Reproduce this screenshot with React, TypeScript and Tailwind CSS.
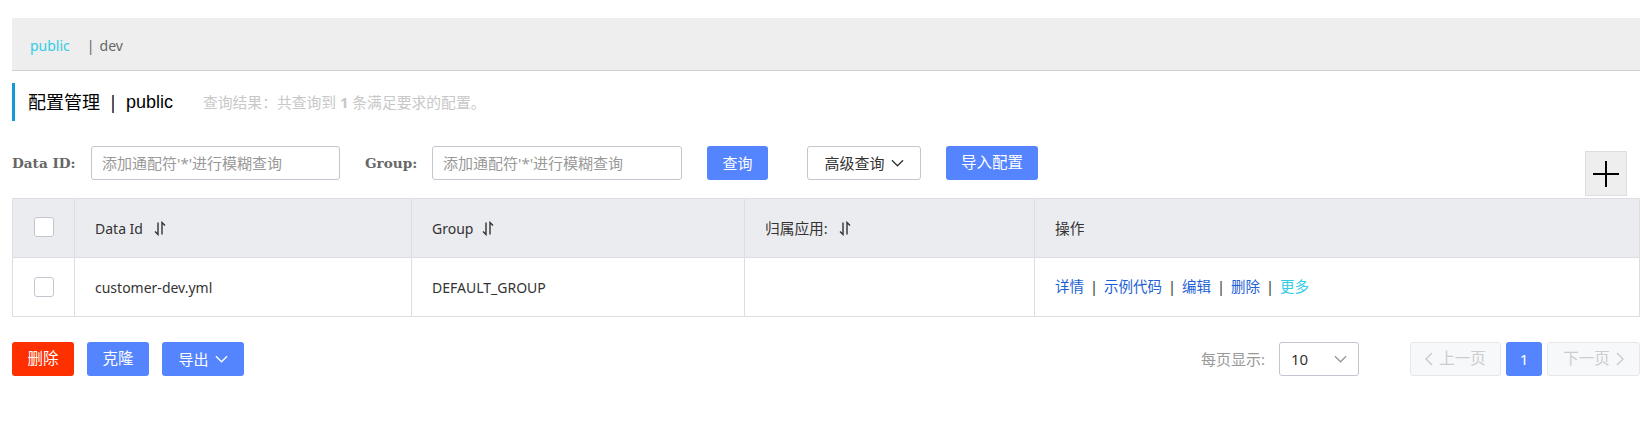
import React from "react";

const Chevron = ({ className }: { className?: string }) => (
  <svg viewBox="0 0 14 8" className={className} fill="none" stroke="currentColor" strokeWidth="1.4">
    <polyline points="1,1 7,7 13,1" />
  </svg>
);

const SortIcon = () => (
  <svg width="12" height="15" viewBox="0 0 12 15" fill="none" stroke="#333" strokeWidth="1.4">
    <path d="M4 1.5 V13.5 L1 10.5" />
    <path d="M8 13.5 V1.5 L11 4.5" />
  </svg>
);

const Checkbox = () => (
  <div className="w-[20px] h-[20px] border border-[#c4c6cf] rounded-[3px] bg-white" />
);

export default function App() {
  return (
    <div className="w-[1652px] h-[435px] bg-white px-[12px] pt-[18px] font-['Noto_Sans','Noto_Sans_CJK_SC',sans-serif] text-[14px] text-[#333]">
      {/* namespace bar */}
      <div className="h-[53px] bg-[#eeeeee] border-b border-[#cfcfcf] flex items-center pl-[18px] pt-[3px]">
        <span className="text-[#33cde5] text-[14px]">public</span>
        <span className="text-[#666] text-[14px] ml-[17px]">|</span>
        <span className="text-[#666] text-[14px] ml-[5px]">dev</span>
      </div>

      {/* title */}
      <div className="mt-[12px] h-[38px] border-l-[3px] border-[#139ad6] flex items-center pl-[13px]">
        <span className="text-[18px] text-black">配置管理</span>
        <span className="text-[18px] text-black mx-[8px]">|</span>
        <span className="text-[18px] text-black font-['Liberation_Sans',sans-serif]">public</span>
        <span className="ml-[30px] text-[14.8px] text-[#c8c8c8]">
          查询结果：共查询到 <strong className="font-bold">1</strong> 条满足要求的配置。
        </span>
      </div>

      {/* filters */}
      <div className="mt-[25px] flex items-start justify-between">
        <div className="flex items-center h-[34px]">
          <label className="w-[63px] font-['DejaVu_Serif',serif] font-bold text-[13.6px] text-[#666] whitespace-nowrap">Data ID:</label>
          <div className="ml-[16px] w-[249px] h-[34px] border border-[#c4c6cf] rounded-[3px] flex items-center pl-[10px] text-[#999] text-[15px] whitespace-nowrap">
            添加通配符'*'进行模糊查询
          </div>
          <label className="ml-[25px] w-[51px] font-['DejaVu_Serif',serif] font-bold text-[13.6px] text-[#666] whitespace-nowrap">Group:</label>
          <div className="ml-[16px] w-[250px] h-[34px] border border-[#c4c6cf] rounded-[3px] flex items-center pl-[10px] text-[#999] text-[15px] whitespace-nowrap">
            添加通配符'*'进行模糊查询
          </div>
          <button className="ml-[25px] w-[61px] h-[34px] rounded-[3px] bg-[#5584ff] text-white text-[15px] flex items-center justify-center">查询</button>
          <button className="ml-[39px] w-[114px] h-[34px] rounded-[3px] bg-white border border-[#c4c6cf] text-[#333] text-[15px] flex items-center justify-center gap-[6px]">
            高级查询
            <Chevron className="w-[13px] h-[8px] text-[#333]" />
          </button>
          <button className="ml-[25px] w-[92px] h-[34px] rounded-[3px] bg-[#5584ff] text-white text-[15.5px] flex items-center justify-center">导入配置</button>
        </div>
        <div className="mt-[5px] mr-[13px] w-[42px] h-[45px] bg-[#eeeeee] border border-[#dddddd] flex items-center justify-center">
          <svg width="26" height="26" viewBox="0 0 26 26" stroke="#000" strokeWidth="2">
            <path d="M13 0 V26 M0 13 H26" />
          </svg>
        </div>
      </div>

      {/* table */}
      <div className="mt-[2px] border border-[#dcdee3]">
        <div className="grid grid-cols-[62px_337px_333px_290px_1fr] h-[59px] bg-[#ebecf0] border-b border-[#dcdee3]">
          <div className="flex items-center justify-center border-r border-[#dcdee3] pb-[3px]"><Checkbox /></div>
          <div className="flex items-center pl-[20px] gap-[11px] border-r border-[#dcdee3]">Data Id <SortIcon /></div>
          <div className="flex items-center pl-[20px] gap-[9px] border-r border-[#dcdee3]">Group <SortIcon /></div>
          <div className="flex items-center pl-[20px] gap-[11px] border-r border-[#dcdee3] text-[14.7px]">归属应用: <SortIcon /></div>
          <div className="flex items-center pl-[20px] text-[14.7px]">操作</div>
        </div>
        <div className="grid grid-cols-[62px_337px_333px_290px_1fr] h-[58px] bg-white">
          <div className="flex items-center justify-center border-r border-[#dcdee3]"><Checkbox /></div>
          <div className="flex items-center pl-[20px] border-r border-[#dcdee3]">customer-dev.yml</div>
          <div className="flex items-center pl-[20px] border-r border-[#dcdee3]">DEFAULT_GROUP</div>
          <div className="flex items-center pl-[20px] border-r border-[#dcdee3]"></div>
          <div className="flex items-center pl-[20px] text-[14.5px]">
            <span className="text-[#1d62d4]">详情</span>
            <span className="text-[#333] mx-[6px]">|</span>
            <span className="text-[#1d62d4]">示例代码</span>
            <span className="text-[#333] mx-[6px]">|</span>
            <span className="text-[#1d62d4]">编辑</span>
            <span className="text-[#333] mx-[6px]">|</span>
            <span className="text-[#1d62d4]">删除</span>
            <span className="text-[#333] mx-[6px]">|</span>
            <span className="text-[#33cde5]">更多</span>
          </div>
        </div>
      </div>

      {/* bottom bar */}
      <div className="mt-[25px] flex items-center justify-between">
        <div className="flex items-center gap-[13px]">
          <button className="w-[62px] h-[34px] rounded-[3px] bg-[#ff3000] text-white text-[15.5px] flex items-center justify-center">删除</button>
          <button className="w-[62px] h-[34px] rounded-[3px] bg-[#5584ff] text-white text-[15.5px] flex items-center justify-center">克隆</button>
          <button className="w-[82px] h-[34px] rounded-[3px] bg-[#5584ff] text-white text-[15px] flex items-center justify-center gap-[6px]">
            导出
            <Chevron className="w-[13px] h-[8px] text-white" />
          </button>
        </div>
        <div className="flex items-center">
          <span className="text-[#999] text-[15px]">每页显示:</span>
          <div className="ml-[14px] w-[80px] h-[34px] border border-[#c4c6cf] rounded-[3px] flex items-center justify-between pl-[11px] pr-[11px]">
            <span className="text-[#333] text-[15px]">10</span>
            <Chevron className="w-[13px] h-[8px] text-[#999]" />
          </div>
          <div className="ml-[51px] w-[91px] h-[34px] rounded-[3px] bg-[#f7f8fa] border border-[#e6e7eb] flex items-center justify-center gap-[6px] text-[#cccccc] text-[15.5px]">
            <svg width="8" height="14" viewBox="0 0 8 14" fill="none" stroke="#cccccc" strokeWidth="1.5"><polyline points="7,1 1,7 7,13" /></svg>
            上一页
          </div>
          <div className="ml-[5px] w-[36px] h-[34px] rounded-[3px] bg-[#5584ff] text-white text-[15px] flex items-center justify-center">1</div>
          <div className="ml-[5px] w-[93px] h-[34px] rounded-[3px] bg-[#f7f8fa] border border-[#e6e7eb] flex items-center justify-center gap-[6px] text-[#cccccc] text-[15.5px]">
            下一页
            <svg width="8" height="14" viewBox="0 0 8 14" fill="none" stroke="#cccccc" strokeWidth="1.5"><polyline points="1,1 7,7 1,13" /></svg>
          </div>
        </div>
      </div>
    </div>
  );
}
